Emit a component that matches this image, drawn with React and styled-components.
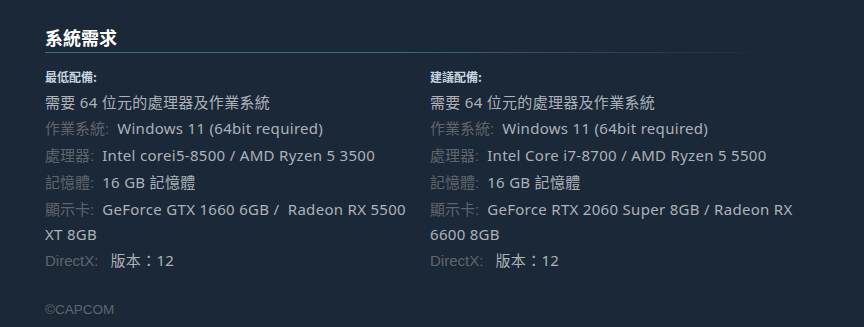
import React from "react";
import styled, { createGlobalStyle } from "styled-components";

const GlobalStyle = createGlobalStyle`
  html, body {
    margin: 0;
    padding: 0;
    background: #1b2838;
  }
  body {
    font-family: "Noto Sans", "Noto Sans CJK TC", sans-serif;
  }
`;

const Page = styled.div`
  width: 864px;
  height: 327px;
  background: #1b2838;
  padding: 26px 45px 0 45px;
  box-sizing: border-box;
`;

const Title = styled.h2`
  margin: 0;
  padding-bottom: 5px;
  font-family: "Noto Sans CJK TC", sans-serif;
  font-size: 18px;
  font-weight: 700;
  line-height: 22px;
  color: #ffffff;
  background-image: linear-gradient(
    to right,
    #3c6e8c 0%,
    #3c6e8c 45%,
    rgba(60, 110, 140, 0) 100%
  );
  background-size: 100% 1px;
  background-repeat: no-repeat;
  background-position: left bottom;
  width: 735px;
`;

const Columns = styled.div`
  display: grid;
  grid-template-columns: 370px 370px;
  column-gap: 15px;
  margin-top: 15px;
`;

const ColHeader = styled.div`
  font-family: "Noto Sans CJK TC", sans-serif;
  font-size: 12px;
  font-weight: 700;
  line-height: 18px;
  color: #c6d4df;
  margin-bottom: 4px;
`;

const List = styled.ul`
  list-style: none;
  margin: 0;
  padding: 0;
`;

const Item = styled.li`
  font-size: 15px;
  letter-spacing: 0.3px;
  line-height: 24px;
  color: #acb2b8;
  margin-bottom: 2px;
`;

const Label = styled.span`
  font-family: "Liberation Sans", "Noto Sans CJK TC", sans-serif;
  letter-spacing: 0;
  color: #5f656b;
  margin-right: 8px;
`;

const Footer = styled.div`
  margin-top: 27px;
  font-family: "Liberation Sans", sans-serif;
  font-size: 13.5px;
  color: #5f656b;
`;

const minimum = [
  ["作業系統:", "Windows 11 (64bit required)"],
  ["處理器:", "Intel corei5-8500 / AMD Ryzen 5 3500"],
  ["記憶體:", "16 GB 記憶體"],
  ["顯示卡:", "GeForce GTX 1660 6GB /\u00a0 Radeon RX 5500 XT 8GB"],
  ["DirectX:", "\u00a0版本：12"],
];

const recommended = [
  ["作業系統:", "Windows 11 (64bit required)"],
  ["處理器:", "Intel Core i7-8700 / AMD Ryzen 5 5500"],
  ["記憶體:", "16 GB 記憶體"],
  ["顯示卡:", "GeForce RTX 2060 Super 8GB / Radeon RX 6600 8GB"],
  ["DirectX:", "\u00a0版本：12"],
];

const ReqColumn = ({ heading, rows }) => (
  <div>
    <ColHeader>{heading}</ColHeader>
    <List>
      <Item>需要 64 位元的處理器及作業系統</Item>
      {rows.map(([label, value]) => (
        <Item key={label}>
          <Label>{label}</Label>
          {value}
        </Item>
      ))}
    </List>
  </div>
);

export default function App() {
  return (
    <>
      <GlobalStyle />
      <Page>
        <Title>系統需求</Title>
        <Columns>
          <ReqColumn heading="最低配備:" rows={minimum} />
          <ReqColumn heading="建議配備:" rows={recommended} />
        </Columns>
        <Footer>©CAPCOM</Footer>
      </Page>
    </>
  );
}
